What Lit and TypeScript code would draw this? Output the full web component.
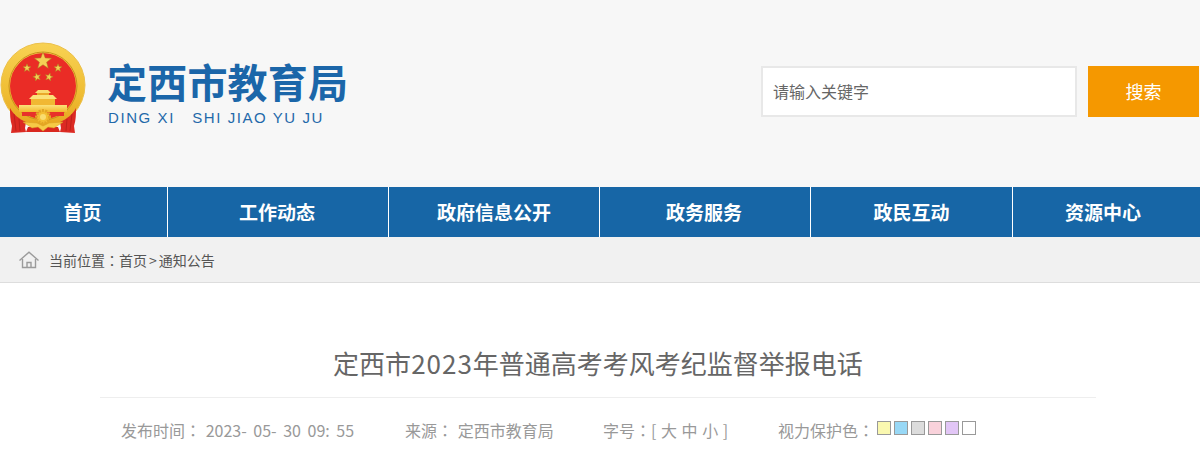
import { LitElement, html, css, svg } from "lit";
import { customElement } from "lit/decorators.js";

const star = (cx: number, cy: number, r: number, rot = 0) => {
  const pts: string[] = [];
  for (let i = 0; i < 10; i++) {
    const rr = i % 2 ? r * 0.42 : r;
    const a = (-90 + rot + i * 36) * Math.PI / 180;
    pts.push(`${(cx + rr * Math.cos(a)).toFixed(2)},${(cy + rr * Math.sin(a)).toFixed(2)}`);
  }
  return svg`<polygon points=${pts.join(" ")} fill="#f4cf55" stroke="#a8801f" stroke-width=".5"/>`;
};

const emblem = html`<svg class="emblem" viewBox="0 0 86 94" width="86" height="94">
  <defs>
    <linearGradient id="g" x1="0" y1="0" x2="0" y2="1"><stop offset="0" stop-color="#f8d253"/><stop offset=".6" stop-color="#efbd33"/><stop offset="1" stop-color="#e6a51f"/></linearGradient>
    <linearGradient id="b" x1="0" y1="0" x2="0" y2="1"><stop offset="0" stop-color="#fbe27a"/><stop offset="1" stop-color="#f3b92c"/></linearGradient>
  </defs>
  <circle cx="43" cy="43" r="42" fill="url(#g)" stroke="#ecc04a" stroke-width="1"/>
  <circle cx="43" cy="44" r="34" fill="none" stroke="#c9921e" stroke-width="1"/>
  <circle cx="43" cy="44" r="33" fill="#ea2c26"/>
  ${star(43, 19, 9)}${star(27, 26, 4.2)}${star(58, 26, 4.2)}${star(37, 35, 4.2, -15)}${star(49, 35, 4.2, 15)}
  <path d="M35 51l3-3h10l3 3z" fill="#f9dc70"/>
  <path d="M37 51h12v2H37z" fill="#e9a92a"/>
  <path d="M29 57l4-4h20l4 4z" fill="#fbe27a"/>
  <path d="M31 57h24v6H31z" fill="#f1b833"/>
  <path d="M19 63h48v7H19z" fill="url(#b)"/>
  <path d="M22 70h42v4H22z" fill="#e8302a"/>
  <path d="M10 66c3 6 9 11 16 14l-1 6 1 4-15 1 1-7c-2-6-2-12-2-18z" fill="#dc2a23"/>
  <path d="M76 66c-3 6-9 11-16 14l1 6-1 4 15 1-1-7c2-6 2-12 2-18z" fill="#dc2a23"/>
  <path d="M14 72l2 17M19 77l1 12M72 72l-2 17M67 77l-1 12" stroke="#b81f1a" stroke-width=".8" fill="none"/>
  <path d="M28 85h30l2 5H26z" fill="#d9281f"/>
  <path d="M23 80l14 1 6 3 6-3 14-1-9 6-6-1-5 4-5-4-6 1z" fill="#f6ca46" stroke="#d99f22" stroke-width=".5"/>
  <circle cx="43" cy="75" r="6.5" fill="#f3bd33" stroke="#e2a524" stroke-width="3" stroke-dasharray="2 1.2"/>
  <circle cx="43" cy="75" r="3" fill="#f9dc70"/>
</svg>`;

const home = html`<svg class="home" viewBox="0 0 20 18" width="20" height="18" fill="none" stroke="#9b9b9b" stroke-width="1.4">
  <path d="M.5 9.5 10 1.2l9.5 8.3"/>
  <path d="M3.5 8v8.5h13V8"/>
  <path d="M8 16.5v-5h4v5"/>
</svg>`;

const colon = html`<span class="c">：</span>`;

@customElement("app-root")
export class AppRoot extends LitElement {
  static styles = css`
    :host {
      display: block;
      width: 1200px;
      height: 450px;
      overflow: hidden;
      background: #fff;
      font-family: "Noto Sans CJK SC", "Liberation Sans", sans-serif;
    }
    .c { font-family: "Noto Sans CJK TC", sans-serif; }
    .header {
      height: 187px;
      box-sizing: border-box;
      background: #f7f7f7;
      display: flex;
      justify-content: space-between;
      padding-top: 42px;
    }
    .brand { display: flex; align-items: flex-start; }
    .emblem { display: block; }
    .names { margin-left: 21px; padding-top: 14px; }
    .cn {
      font-size: 40px;
      line-height: 50px;
      font-weight: 700;
      letter-spacing: 0.2px;
      color: #1b66a9;
      white-space: nowrap;
    }
    .py {
      margin: 3px 0 0 1px;
      font-family: "Liberation Sans", sans-serif;
      font-size: 15px;
      line-height: 18px;
      letter-spacing: 1.58px;
      color: #1f69aa;
      white-space: pre;
    }
    .search { display: flex; padding: 24px 1px 0 0; height: 51px; }
    .input {
      width: 316px;
      height: 51px;
      box-sizing: border-box;
      border: 2px solid #e8e8e8;
      background: #fff;
      padding-left: 10px;
      font-size: 16px;
      line-height: 47px;
      color: #666;
    }
    .btn {
      width: 111px;
      height: 51px;
      margin-left: 11px;
      background: #f59800;
      color: #fff;
      font-size: 18px;
      line-height: 51px;
      text-align: center;
    }
    .nav { height: 50px; background: #1766a6; display: flex; }
    .nav a {
      box-sizing: border-box;
      height: 50px;
      border-right: 1px solid #fff;
      color: #fff;
      font-size: 19px;
      font-weight: 700;
      line-height: 50px;
      text-align: center;
    }
    .nav a:last-child { border-right: 0; }
    .crumb {
      height: 46px;
      box-sizing: border-box;
      background: #f1f1f1;
      border-bottom: 1px solid #ddd;
      display: flex;
      align-items: center;
      padding-left: 19px;
      font-size: 14px;
      color: #555;
    }
    .crumb > span { margin-left: 10px; }
    .sep { margin: 0 2px; }
    .title {
      margin: 0;
      padding: 60px 4px 0 0;
      height: 54px;
      box-sizing: content-box;
      font-size: 26px;
      font-weight: 400;
      line-height: 40px;
      text-align: center;
      color: #666;
    }
    .digits { letter-spacing: 1px; }
    .meta {
      margin: 0 104px 0 100px;
      border-top: 1px solid #eee;
      display: flex;
      padding: 20px 0 0 21px;
      font-size: 16px;
      line-height: 24px;
      color: #999;
      white-space: pre;
    }
    .time { width: 284px; }
    .date { margin-left: 1px; word-spacing: 3px; }
    .src { width: 198px; }
    .srcname { margin-left: 1px; }
    .size { width: 175px; word-spacing: 1px; }
    .eye { display: flex; }
    .swatches { display: flex; gap: 3px; margin-left: 3px; padding-top: 3px; }
    .sw { width: 14px; height: 14px; box-sizing: border-box; border: 1px solid #999; }
    .s1 { background: #faf8b0; }
    .s2 { background: #98d8f6; }
    .s3 { background: #dcdcdc; }
    .s4 { background: #f9d2db; }
    .s5 { background: #e2c6f6; }
    .s6 { background: #fff; }
  `;

  render() {
    const nav: [string, number, number][] = [
      ["首页", 168, 2], ["工作动态", 221, 2], ["政府信息公开", 211, 0],
      ["政务服务", 211, 2], ["政民互动", 202, 0], ["资源中心", 187, 7],
    ];
    return html`
      <div class="header">
        <div class="brand">
          ${emblem}
          <div class="names">
            <div class="cn">定西市教育局</div>
            <div class="py">DING XI   SHI JIAO YU JU</div>
          </div>
        </div>
        <div class="search">
          <div class="input">请输入关键字</div>
          <div class="btn">搜索</div>
        </div>
      </div>
      <div class="nav">
        ${nav.map(([t, w, p]) => html`<a style="width:${w}px;padding-right:${p}px">${t}</a>`)}
      </div>
      <div class="crumb">${home}<span>当前位置${colon}首页<span class="sep">&gt;</span>通知公告</span></div>
      <h1 class="title">定西市<span class="digits">2023</span>年普通高考考风考纪监督举报电话</h1>
      <div class="meta">
        <div class="time">发布时间${colon} <span class="date">2023- 05- 30 09: 55</span></div>
        <div class="src">来源${colon} <span class="srcname">定西市教育局</span></div>
        <div class="size">字号${colon}[ 大 中 小 ]</div>
        <div class="eye">视力保护色${colon}<div class="swatches">
          ${[1, 2, 3, 4, 5, 6].map((n) => html`<div class="sw s${n}"></div>`)}
        </div></div>
      </div>
    `;
  }
}
